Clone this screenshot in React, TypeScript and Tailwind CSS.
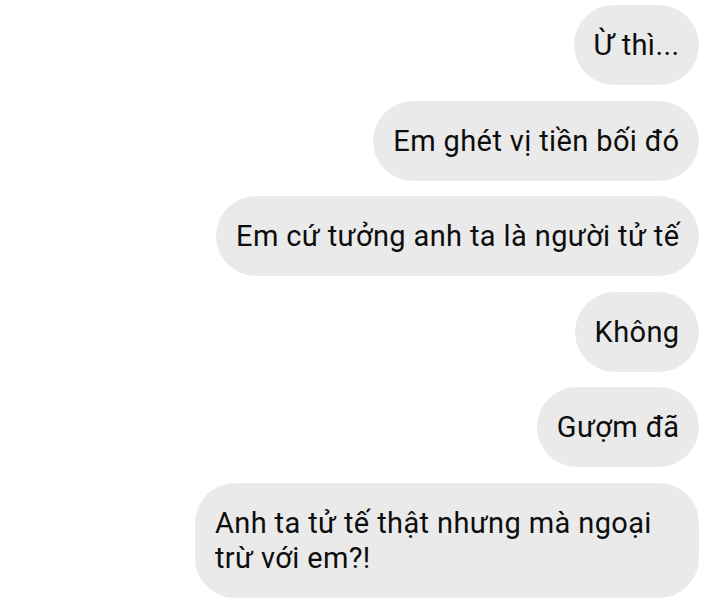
import React from "react";

const messages = [
  "Ừ thì...",
  "Em ghét vị tiền bối đó",
  "Em cứ tưởng anh ta là người tử tế",
  "Không",
  "Gượm đã",
  "Anh ta tử tế thật nhưng mà ngoại trừ với em?!",
];

export default function App() {
  return (
    <div
      className="w-[720px] h-[606px] bg-white overflow-hidden flex flex-col items-end gap-[15.5px] pt-[5px] pr-[21px]"
      style={{ fontFamily: "Roboto, 'Noto Sans', sans-serif" }}
    >
      {messages.map((m, i) => (
        <div
          key={i}
          className="max-w-[504px] bg-[#eaeaea] text-[#0d0d0d] rounded-[40px] pl-[20px] pr-[19.5px] pt-[23px] pb-[22px] text-[29px] leading-[35px] tracking-[0.38px]"
        >
          {m}
        </div>
      ))}
    </div>
  );
}
